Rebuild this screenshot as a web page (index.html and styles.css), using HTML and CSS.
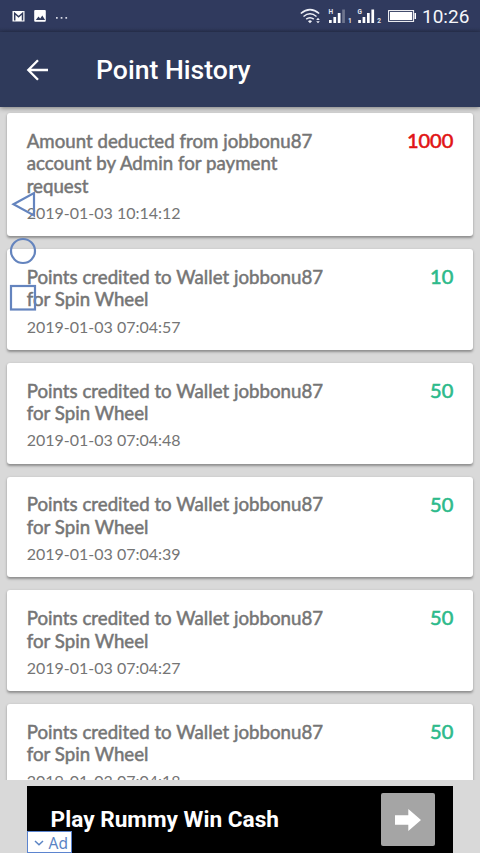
FILE: index.html
```html
<!DOCTYPE html>
<html lang="en">
<head>
<meta charset="utf-8">
<title>Point History</title>
<link rel="stylesheet" href="styles.css">
</head>
<body>
<div class="screen">
  <div class="status">
    <svg class="status-left" width="80" height="32" viewBox="0 0 80 32">
      <path fill="#fff" d="M12.500 11h12v10.500h-12z"/>
      <path fill="none" stroke="#303a5c" stroke-width="1.500" d="M14.700 20.500v-7.200l3.900 3.400 3.900-3.400v7.200"/>
      <rect x="34.200" y="10" width="11.600" height="11.800" rx="1" fill="#fff"/>
      <path fill="#303a5c" d="M35.800 20l2.700-3.400 1.700 1.900 2.100-3 2.800 4.500z"/>
      <path fill="#d5d8e4" d="M56 17h1.700v1.700H56zM60.700 17h1.700v1.700h-1.700zM65.400 17h1.700v1.700h-1.700z"/>
    </svg>
    <svg class="status-right" width="120" height="32" viewBox="298 0 120 32">
      <g fill="none" stroke="#eef0f7" stroke-width="1.500">
        <path d="M300.800 13.500Q310 5.800 319.200 13.500"/>
        <path d="M303.500 16.500Q310 11.200 316.500 16.500"/>
        <path d="M306.200 19.200Q310 16.200 313.800 19.200"/>
      </g>
      <path fill="#eef0f7" d="M308 21.200Q310 19.500 312 21.200L310 23.200zM316.200 20l1.800-2.300 1.800 2.300zM316.200 21.200h3.600L318 23.300z"/>
      <g fill="#fff">
        <path d="M329 20h2.700v3H329zM333.400 17h2.700v6h-2.700zM337.800 13h2.700v10h-2.700z"/>
        <path opacity=".3" d="M342.200 9.500h2.700V23h-2.700z"/>
        <path d="M358.200 20h2.700v3h-2.700zM362.600 17h2.700v6h-2.700zM367 13h2.700v10H367zM371.400 9.500h2.700V23h-2.700z"/>
      </g>
      <g class="sim">
        <text x="328.500" y="14">H</text><text x="348" y="23">1</text>
        <text x="357.500" y="14">G</text><text x="377.300" y="23">2</text>
      </g>
      <rect x="388.600" y="10.600" width="25" height="10.800" fill="none" stroke="#fff"/>
      <path fill="#fff" d="M390 12h22.200v8H390zM414.500 13h1.500v6h-1.500z"/>
    </svg>
    <span class="clock">10:26</span>
  </div>
  <header class="toolbar">
    <svg class="back" width="24" height="24" viewBox="0 0 24 24"><path fill="none" stroke="#fff" stroke-width="2.300" d="M13 2.300L3.300 12 13 21.700M3.500 12H23"/></svg>
    <h1>Point History</h1>
  </header>
  <main class="list">
    <article class="card"><div class="info"><p class="title">Amount deducted from jobbonu87 account by Admin for payment request</p><time>2019-01-03 10:14:12</time></div><b class="points debit">1000</b></article>
    <article class="card"><div class="info"><p class="title">Points credited to Wallet jobbonu87 for Spin Wheel</p><time>2019-01-03 07:04:57</time></div><b class="points">10</b></article>
    <article class="card"><div class="info"><p class="title">Points credited to Wallet jobbonu87 for Spin Wheel</p><time>2019-01-03 07:04:48</time></div><b class="points">50</b></article>
    <article class="card"><div class="info"><p class="title">Points credited to Wallet jobbonu87 for Spin Wheel</p><time>2019-01-03 07:04:39</time></div><b class="points">50</b></article>
    <article class="card"><div class="info"><p class="title">Points credited to Wallet jobbonu87 for Spin Wheel</p><time>2019-01-03 07:04:27</time></div><b class="points">50</b></article>
    <article class="card"><div class="info"><p class="title">Points credited to Wallet jobbonu87 for Spin Wheel</p><time>2019-01-03 07:04:18</time></div><b class="points">50</b></article>
  </main>
  <footer class="ad">
    <span class="ad-text">Play Rummy Win Cash</span>
    <span class="ad-go"><svg width="26" height="22" viewBox="0 0 26 22"><path fill="#fff" d="M0 6.200h13.300V0L26 11 13.300 22v-6.200H0z"/></svg></span>
    <span class="ad-tag"><svg width="10" height="6" viewBox="0 0 10 6"><path fill="none" stroke="#5b84c4" stroke-width="1.500" d="M1 1l4 3.700L9 1"/></svg>Ad</span>
  </footer>
  <svg class="nav-overlay" width="28" height="122" viewBox="0 0 28 122" fill="none" stroke="#6484be" stroke-width="2.200">
    <path d="M4.500 14.300L25 3v22.500z"/>
    <circle cx="14" cy="61" r="12"/>
    <rect x="2" y="96" width="24" height="23.500"/>
  </svg>
</div>
</body>
</html>
```

FILE: styles.css
```css
* { box-sizing: border-box; }
body { margin: 0; }
h1, p { margin: 0; }
.screen {
  position: relative;
  display: flex;
  flex-direction: column;
  width: 480px;
  height: 853px;
  overflow: hidden;
  background: #d9d9d9;
  font-family: Lato, sans-serif;
}
.status {
  flex: none;
  display: flex;
  align-items: center;
  height: 32px;
  padding-right: 11px;
  background: linear-gradient(#303a5e 28px, #2b3454);
  color: #f5f6fa;
}
.status-right { margin-left: auto; }
.sim text { font: 700 6.5px Roboto, sans-serif; fill: #e4e7f0; }
.clock { width: 47px; margin-left: 4px; padding-top: 1px; font: 19px/31px Roboto, sans-serif; white-space: nowrap; }
.toolbar {
  position: relative;
  flex: none;
  display: flex;
  align-items: center;
  height: 75px;
  padding: 0 25px;
  background: #2f3a5b;
  box-shadow: 0 1px 5px rgba(0, 0, 0, .45);
}
.back { flex: none; }
.toolbar h1 {
  margin-left: 47px;
  color: #fff;
  font: 500 26.6px/32px Roboto, sans-serif;
}
.list {
  flex: none;
  display: flex;
  flex-direction: column;
  gap: 13.1px;
  height: 673px;
  padding: 6.3px 6.7px 0;
  overflow: hidden;
}
.card {
  flex: none;
  display: flex;
  justify-content: space-between;
  padding: 16.7px 20px 13.6px;
  border-radius: 3px;
  background: #fff;
  box-shadow: 0 1.3px 2.5px rgba(0, 0, 0, .35);
  color: #757575;
}
.info { width: 310px; }
.title {
  font-size: 18.67px;
  line-height: 22.4px;
  letter-spacing: .02px;
  -webkit-text-stroke: .5px currentColor;
}
time { display: block; margin-top: 5.8px; font-size: 16px; line-height: 19.7px; }
.points {
  margin-top: -.8px;
  color: #2dba8b;
  font-size: 20px;
  font-weight: 400;
  line-height: 22.4px;
  -webkit-text-stroke: .6px currentColor;
}
.debit { color: #e11414; }
.ad {
  position: relative;
  flex: none;
  display: flex;
  align-items: center;
  justify-content: space-between;
  width: 426.6px;
  height: 67px;
  margin: 6px 0 0 26.6px;
  padding: 0 18.7px 0 24px;
  background: #000;
  color: #fff;
}
.ad-text { font: 700 22.65px/28px Roboto, sans-serif; white-space: nowrap; }
.ad-go {
  display: flex;
  align-items: center;
  justify-content: center;
  width: 53.5px;
  height: 53.5px;
  border-radius: 2px;
  background: #a5a5a5;
}
.ad-tag {
  position: absolute;
  left: 0;
  bottom: 0;
  display: flex;
  align-items: center;
  gap: 5px;
  width: 45px;
  height: 22px;
  padding: 1px 0 0 6px;
  border: 1px solid #5b84cf;
  background: #fff;
  color: #5b84c4;
  font: 15.5px/20px "Noto Sans", sans-serif;
}
.nav-overlay { position: absolute; left: 9px; top: 190px; }
```
